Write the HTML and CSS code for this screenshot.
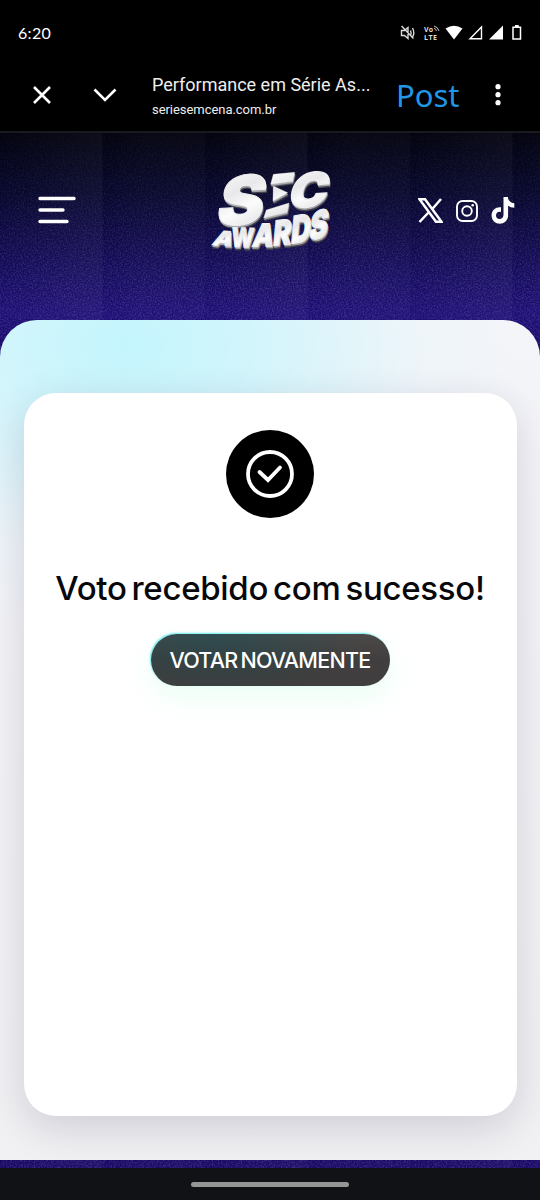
FILE: index.html
```html
<!DOCTYPE html>
<html lang="pt-BR">
<head>
<meta charset="utf-8">
<title>SEC Awards</title>
<link rel="stylesheet" href="styles.css">
</head>
<body>
<div class="screen">
  <div class="status">
    <span class="clock">6:20</span>
    <svg class="status-icons" viewBox="0 0 126 20" width="126" height="20">
      <g fill="none" stroke="#ddd" stroke-width="1.400">
        <path d="M1.500 7.500v5h3l3.500 3v-11l-3.500 3zM1.500 3l12 12.500M10.500 7.500q1.300 2.500 0 5M12.500 5q2.600 5 0 9"/>
      </g>
      <text class="volte" x="24" y="8.500" textLength="9">Vo</text>
      <text class="volte" x="24" y="16.500" textLength="13">LTE</text>
      <path d="M34 5q2 1 2.500 3M34 3q4 1 5 5" fill="none" stroke="#ddd" stroke-width=".9"/>
      <path d="M45.500 5.500q8.500-5.500 17 0L54 16.500z" fill="#fff"/>
      <path d="M70 15.700h11.500V4z" fill="none" stroke="#fff" stroke-width="1.400"/>
      <path d="M89 16.500h14V2.500z" fill="#fff"/>
      <path d="M113 4.300h7.500v11.700h-7.500z" fill="none" stroke="#fff" stroke-width="1.500"/>
      <path d="M115 2h3.700v2H115z" fill="#fff"/>
    </svg>
  </div>
  <div class="toolbar">
    <svg class="close" width="20" height="20" viewBox="0 0 20 20"><path d="M2 2l16 16M18 2L2 18"/></svg>
    <svg class="chevron" width="26" height="16" viewBox="0 0 26 16"><path d="M2.500 2.500L13 13 23.500 2.500"/></svg>
    <div class="page-info">
      <div class="page-title">Performance em Série As...</div>
      <div class="page-url">seriesemcena.com.br</div>
    </div>
    <span class="post">Post</span>
    <svg class="more" width="8" height="24" viewBox="0 0 8 24" fill="#fff"><circle cx="4" cy="3.700" r="2.600"/><circle cx="4" cy="11.700" r="2.600"/><circle cx="4" cy="19.700" r="2.600"/></svg>
  </div>
  <div class="site">
    <svg class="grain" width="540" height="1036">
      <filter id="noise"><feTurbulence type="fractalNoise" baseFrequency=".65" numOctaves="2" seed="4"/><feColorMatrix values="0 0 0 0 .4  0 0 0 0 .4  0 0 0 0 .75  1.600 0 0 0 -.6"/></filter>
      <rect width="540" height="1036" filter="url(#noise)"/>
    </svg>
    <header class="header">
      <svg class="menu" width="38" height="28" viewBox="0 0 38 28"><path d="M2 2.500h34M2 14h23M2 25.500h27"/></svg>
      <svg class="logo" width="123" height="84" viewBox="60 40 369 252">
        <defs>
          <linearGradient id="metal" x1="0" y1="0" x2=".3" y2="1">
            <stop offset="0" stop-color="#fff"/><stop offset=".45" stop-color="#e8e8ea"/><stop offset=".7" stop-color="#fcfcfc"/><stop offset="1" stop-color="#e4e4e6"/>
          </linearGradient>
          <g id="mark">
            <text transform="matrix(2.120 -.13 -.42 2.060 72 215)" stroke-width="1.500">S</text>
            <path d="M250 59l64-6-6 27-66 9zM250 94l43 20-44 25zM229 166l68-21-6 28-70 17z"/>
            <text transform="matrix(1.560 -.13 -.35 1.440 289 162)" stroke-width="3">C</text>
          </g>
          <g id="word" stroke-width="3">
            <text transform="matrix(.75 .05 -.25 .6 64 271)">A</text>
            <text transform="matrix(.63 .02 -.08 .8 121 276)">W</text>
            <text transform="matrix(.8 -.02 -.17 .95 184 276)">A</text>
            <text transform="matrix(.82 -.08 -.1 1.040 247 273)">R</text>
            <text transform="matrix(.82 -.13 -.1 1.140 301 267)">D</text>
            <text transform="matrix(.84 -.2 -.15 1.180 354 258)">S</text>
          </g>
        </defs>
        <g fill="#45454e" stroke="#45454e"><use href="#mark" x="3" y="9"/><use href="#word" x="3" y="9"/></g>
        <g fill="#a7a7ad" stroke="#a7a7ad"><use href="#mark" x="1" y="5"/><use href="#word" x="2" y="5"/></g>
        <g fill="url(#metal)" stroke="#efeff1"><use href="#mark"/><use href="#word"/></g>
      </svg>
      <div class="socials">
        <svg width="25" height="25" viewBox="0 0 25 25"><path d="M1.500 1.200h5.500l16.500 22.600H18zM23 1L14.300 11M10.500 14.500L1.500 24" fill="none" stroke="#fff" stroke-width="2.500"/></svg>
        <svg width="22" height="22" viewBox="0 0 22 22"><rect x="1" y="1" width="20" height="20" rx="5.500" fill="none" stroke="#fff" stroke-width="1.900"/><circle cx="11" cy="11" r="4.800" fill="none" stroke="#fff" stroke-width="1.900"/><circle cx="16.700" cy="5.300" r="1.300" fill="#fff"/></svg>
        <svg width="24" height="27" viewBox="0 0 24 27"><path d="M12.500 0h4.400c.3 3.800 2.500 6 6.400 6.300v4.500c-2.500 0-4.500-.8-6.200-2v9.400c0 10.800-15.800 11.400-16.500.8C.4 12.800 5.200 9.700 10 10.300v4.600c-3-.8-5 1-5 3.500 0 4.800 7.500 5 7.500-.6z" fill="#fff"/></svg>
      </div>
    </header>
    <main class="panel">
      <section class="card">
        <div class="badge"><svg width="48" height="48" viewBox="0 0 48 48"><circle cx="24" cy="24" r="22"/><path d="M13.500 22l8.500 8 12-12.500"/></svg></div>
        <h1 class="message">Voto recebido com sucesso!</h1>
        <button class="again">VOTAR NOVAMENTE</button>
      </section>
    </main>
  </div>
  <div class="nav"><span class="handle"></span></div>
</div>
</body>
</html>
```
FILE: styles.css
```css
* { box-sizing: border-box; }
body { margin: 0; background: #000; color: #fff; font-family: Inter, "Liberation Sans", sans-serif; }
svg { display: block; flex: none; }
.screen { width: 540px; height: 1200px; display: flex; flex-direction: column; overflow: hidden; }
.status { height: 65px; padding: 0 14px 0 18px; display: flex; align-items: center; justify-content: space-between; }
.clock { font: 16px/20px Lato, sans-serif; letter-spacing: .3px; }
.volte { font: 700 7px "Open Sans", sans-serif; fill: #ddd; }
.toolbar { height: 68px; border-bottom: 2px solid #191a20; padding-left: 32px; display: flex; align-items: center; padding-bottom: 7px; }
.close path, .chevron path { fill: none; stroke: #fff; stroke-width: 2.6; }
.chevron { margin-left: 40px; }
.page-info { width: 220px; margin-left: 34px; padding-top: 3px; white-space: nowrap; }
.page-title { font: 18px/24px Roboto, sans-serif; color: #eee; }
.page-url { font: 13px/18px Roboto, sans-serif; margin-top: 4px; color: #eee; letter-spacing: -.05px; }
.post { font: 31px/40px "Noto Sans", sans-serif; color: #2196e5; margin-left: 24px; width: 65px; }
.more { margin-left: 33px; }
.site { height: 1035px; position: relative; padding-bottom: 8px;
  background:
    repeating-linear-gradient(90deg, transparent 0 103px, rgba(255,255,255,.015) 140px, rgba(255,255,255,.02) 205px),
    repeating-linear-gradient(90deg, transparent 0, rgba(255,255,255,.035) 102px, transparent 103px 205px),
    linear-gradient(#03030f 0, #06062b 60px, #10094d 115px, #1c0d74 180px, #190764 230px, #190764 100%); }
.grain { position: absolute; inset: 0; opacity: .3; height: 100%; -webkit-mask-image: linear-gradient(rgba(0,0,0,.2), #000 150px); mask-image: linear-gradient(rgba(0,0,0,.2), #000 150px); }
.header { position: relative; height: 187px; padding: 34px 24px 0 38px; display: flex; align-items: flex-start; }
.menu { margin-top: 29px; }
.menu path { stroke: #fff; stroke-width: 3.4; stroke-linecap: round; }
.logo { margin-left: 134px; margin-top: 1px; }
.logo text { font: 900 100px Inter, sans-serif; }
.socials { display: flex; align-items: center; gap: 13px; margin: 30px 0 0 85px; }
.panel { position: relative; height: 840px; border-radius: 37px 37px 0 0; padding: 73px 23px 0 24px; overflow: hidden;
  background: radial-gradient(ellipse 430px 300px at 125px 25px, #c4f5fd 0, rgba(204,245,252,.85) 30%, rgba(230,245,250,.4) 70%, transparent 100%), linear-gradient(#f5f5f9, #f1f1f3); }
.card { height: 723px; border-radius: 32px; background: #fff; padding: 37px 1px 0 0; display: flex; flex-direction: column; align-items: center; box-shadow: 0 12px 40px rgba(30,20,60,.16); }
.badge { width: 88px; height: 88px; border-radius: 50%; background: #000; display: flex; align-items: center; justify-content: center; }
.badge svg { fill: none; stroke: #fff; stroke-width: 3.8; stroke-linecap: round; }
.message { margin: 50px 0 0; font: 450 33px/40px Inter, sans-serif; color: #08080b; white-space: nowrap; letter-spacing: -.3px; word-spacing: -3.5px; }
.again { margin-top: 26px; width: 239px; height: 52px; padding: 0; border: 0; border-radius: 26px; color: #fff; font: 500 21.5px/53px Inter, sans-serif; letter-spacing: -.75px; word-spacing: -2px; white-space: nowrap;
  background: radial-gradient(ellipse 150px 60px at 60px 0, rgba(0,80,90,.38), transparent), linear-gradient(#4c4949, #403e3e 50%);
  box-shadow: 0 12px 28px rgba(100,255,180,.13), -1px -1px 2px rgba(0,220,230,.6); }
.nav { height: 32px; background: #111216; display: flex; justify-content: center; padding-top: 14px; }
.handle { width: 158px; height: 5px; border-radius: 3px; background: #959595; }
```
